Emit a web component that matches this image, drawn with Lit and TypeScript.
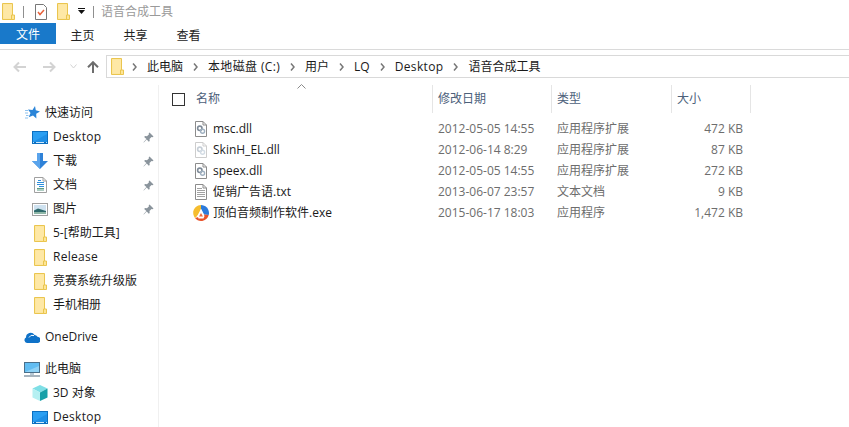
import { LitElement, html, css } from "lit";
import { customElement } from "lit/decorators.js";

const folder = (w = 13, h = 17) => html`<svg class="ic" width=${w} height=${h} viewBox="0 0 13 17"><path d="M.5.5h10v16H.5z" fill="#fde596" stroke="#eac54f"/><path d="M1.500 1.500h8.500v10.500l-1 1v2.500H1.500z" fill="#fee8a6"/><path d="M9.500 16.500v-4.500h3v4.500z" fill="#fde596" stroke="#eac54f"/></svg>`;
const desktop = html`<svg class="ic" width="16" height="13" viewBox="0 0 16 13"><rect width="16" height="13" fill="#0c6fc0"/><rect x="1" y="1" width="14" height="10" fill="#2b9ff2"/><path d="M1 11L15 3v8z" fill="#1f8fe6"/><rect x="1" y="11" width="1" height="1" fill="#bfe0f8"/><rect x="14" y="11" width="1" height="1" fill="#bfe0f8"/><rect x="4" y="11" width="8" height="1" fill="#cfe8fb"/></svg>`;
const pin = html`<svg class="pin" width="11" height="11" viewBox="0 0 11 11"><path d="M6.500.5l4 4-1 .8-1-.3-2 2 .2 2-.9.8-2.100-2.200L.8 10.500.5 10.200 3.400 7 1.200 5l.8-.9 2 .2 2-2-.3-1z" fill="#8a949c"/></svg>`;
const dll = (light = false) => {
  const page = light ? "#cdcdcd" : "#8c8c8c";
  const a = light ? "#c6ced6" : "#7f8b98";
  const b = light ? "#d3dce4" : "#9fb0c0";
  return html`<svg class="ic" width="12" height="16" viewBox="0 0 12 16"><path d="M.5.5h7.500l3.500 3.500v11.500H.5z" fill="#fff" stroke=${page}/><path d="M8 .5V4h3.500" fill="none" stroke=${page}/><circle cx="4.800" cy="7.300" r="2.200" fill="none" stroke=${a} stroke-width="1.600"/><circle cx="7.600" cy="10.300" r="2" fill="none" stroke=${b} stroke-width="1.400"/></svg>`;
};
const txt = html`<svg class="ic" width="12" height="16" viewBox="0 0 12 16"><path d="M.5.5h7.500l3.500 3.500v11.500H.5z" fill="#fff" stroke="#8c8c8c"/><path d="M8 .5V4h3.500" fill="none" stroke="#8c8c8c"/><path d="M2 4.500h5M2 6.500h8M2 8.500h8M2 10.500h8M2 12.500h8" stroke="#a2a2a2"/></svg>`;
const exe = html`<svg class="ic" width="16" height="16" viewBox="0 0 16 16"><path d="M8 0C4 0 .8 3 .2 6.800.1 9 .6 11.200 2 13l3.200-3L8 3.500z" fill="#f6bd2e"/><path d="M8 0c4.400 0 8 3.600 8 8 0 .7-.1 1.400-.3 2L11 9.500 8 3.500z" fill="#2c7bdc"/><path d="M2 13c1.500 1.900 3.700 3 6 3 3.700 0 6.800-2.500 7.700-6L11 9.500l-1 2.500H5.500z" fill="#e9542c"/><path d="M8 4.500l3.500 6.500-1 2.500h-5l-1-3z" fill="#fff"/><path d="M8 8l2 3.500H6z" fill="#ef6a3c"/></svg>`;

const cols = [
  { cls: "date", label: "修改日期" },
  { cls: "type", label: "类型" },
  { cls: "size", label: "大小" },
];
const files: [any, string, string, string, string][] = [
  [dll(), "msc.dll", "2012-05-05 14:55", "应用程序扩展", "472 KB"],
  [dll(true), "SkinH_EL.dll", "2012-06-14 8:29", "应用程序扩展", "87 KB"],
  [dll(), "speex.dll", "2012-05-05 14:55", "应用程序扩展", "272 KB"],
  [txt, "促销广告语.txt", "2013-06-07 23:57", "文本文档", "9 KB"],
  [exe, "顶伯音频制作软件.exe", "2015-06-17 18:03", "应用程序", "1,472 KB"],
];
const crumbs = [
  { t: "此电脑", c: "" },
  { t: "本地磁盘 (C:)", c: "wide" },
  { t: "用户", c: "" },
  { t: "LQ", c: "" },
  { t: "Desktop", c: "wide" },
  { t: "语音合成工具", c: "" },
];

const chev = html`<svg class="crumb-sep" width="5" height="8" viewBox="0 0 5 8"><path d="M1 .5L4 4 1 7.500" fill="none" stroke="#777" stroke-width="1.500"/></svg>`;

@customElement("app-root")
export class AppRoot extends LitElement {
  static styles = css`
    :host { display: block; width: 849px; height: 427px; overflow: hidden; background: #fff; color: #1a1a1a;
      font: 12px/16px "Open Sans", "Noto Sans CJK SC", sans-serif; }
    .ic { flex: none; display: block; }
    .title { height: 23px; display: flex; align-items: center; padding-left: 2px; }
    .title .sep { width: 1px; height: 12px; background: #8f8f8f; }
    .title .sep.first { margin-left: 8px; }
    .title .t { color: #9a9a9a; margin-left: 7px; }
    .check { margin: 0 10px 0 11px; }
    .drop { margin: 0 8px; display: block; }
    .tabs { height: 23px; display: flex; color: #222; }
    .tab { display: flex; align-items: center; justify-content: center; width: 53px; padding-top: 2px; box-sizing: border-box; }
    .tab.file { width: 56px; background: #1979ca; color: #fff; }
    .rule { height: 3px; border-bottom: 1px solid #dadada; }
    .addr-row { height: 29px; display: flex; align-items: flex-start; padding-top: 5px; box-sizing: border-box; }
    .nav { width: 106px; flex: none; display: flex; align-items: center; height: 23px; padding-left: 13px; box-sizing: border-box; }
    .nav svg { display: block; flex: none; }
    .nav .next { margin-left: 15px; }
    .nav .down { margin-left: 14px; }
    .nav .up { margin-left: 10px; }
    .addr { flex: 1; height: 23px; box-sizing: border-box; border: 1px solid #d9d9d9; border-right: 0; display: flex; align-items: center; padding-left: 4px; color: #1a1a1a; }
    .addr .ic { margin-right: -2px; }
    .crumb-sep { margin: 0 10px; }
    .c.wide { letter-spacing: .35px; }
    .main { display: flex; }
    .side { width: 158px; height: 342px; flex: none; margin-top: 6px; padding-top: 16px; box-sizing: content-box; border-right: 1px solid #f0f0f0; }
    .row { height: 24px; display: flex; align-items: center; position: relative; padding-left: 32px; box-sizing: border-box; white-space: nowrap; }
    .row .ic { margin-right: 5px; }
    .row .lat { letter-spacing: .3px; }
    .row.folder .ic { margin-left: 2px; margin-right: 6px; }
    .row.doc .ic { margin-left: 2px; margin-right: 6px; }
    .row.top { padding-left: 25px; }
    .row.root { padding-left: 24px; }
    .gap { height: 8px; }
    .pin { position: absolute; left: 143px; top: 7px; }
    .list { flex: 1; position: relative; }
    .head { display: flex; height: 28px; align-items: center; margin-top: 6px; color: #4c607a; position: relative; }
    .head .name { width: 273px; flex: none; box-sizing: border-box; padding-left: 13px; display: flex; align-items: center; }
    .box { width: 11px; height: 11px; border: 1px solid #333; margin-right: 11px; flex: none; }
    .head .col { height: 28px; display: flex; align-items: center; flex: none; box-sizing: border-box; border-left: 1px solid #e5e5e5; padding-left: 5px; }
    .col.date { width: 119px; }
    .col.type { width: 120px; }
    .col.size { width: 80px; border-right: 1px solid #e5e5e5; }
    .sort { position: absolute; left: 138px; top: -1px; display: block; }
    .files { padding-top: 5px; }
    .file { height: 21px; display: flex; align-items: center; color: #6d6d6d; white-space: nowrap; }
    .file .n { width: 272px; flex: none; box-sizing: border-box; display: flex; align-items: center; padding-left: 36px; color: #1a1a1a; }
    .file .n .ic { margin-right: 6px; }
    .file .n .wide { margin-left: -2px; margin-right: 4px; }
    .file .n .wide .ic { margin-right: 0; }
    .file .d { width: 119px; flex: none; padding-left: 7px; box-sizing: border-box; }
    .file .y { width: 120px; flex: none; padding-left: 7px; box-sizing: border-box; }
    .file .s { width: 73px; flex: none; text-align: right; }
  `;

  render() {
    const arrow = (cls: string, d: string, c: string) => html`<svg class=${cls} width="14" height="12" viewBox="0 0 14 12"><path d=${d} fill="none" stroke=${c} stroke-width="2"/></svg>`;
    return html`
      <div class="title">
        ${folder()}
        <div class="sep first"></div>
        <svg class="ic check" width="12" height="16" viewBox="0 0 12 16"><path d="M.5.5h8l3 3v12H.5z" fill="#fff" stroke="#777"/><path d="M3 8l2 2.500L9 6" fill="none" stroke="#e8613a" stroke-width="1.500"/></svg>
        ${folder()}
        <svg class="drop" width="7" height="7" viewBox="0 0 7 7"><path d="M0 0h7v1H0zM0 2h7L3.500 6z" fill="#111"/></svg>
        <div class="sep"></div>
        <span class="t">语音合成工具</span>
      </div>
      <div class="tabs">
        <div class="tab file">文件</div>
        <div class="tab">主页</div>
        <div class="tab">共享</div>
        <div class="tab">查看</div>
      </div>
      <div class="rule"></div>
      <div class="addr-row">
        <div class="nav">
          ${arrow("", "M13 6H2M6 1.500L1.500 6 6 10.500", "#d3d3d3")}
          ${arrow("next", "M1 6h11M8 1.500L12.500 6 8 10.500", "#d3d3d3")}
          <svg class="down" width="7" height="5" viewBox="0 0 7 5"><path d="M.5.5L3.500 4 6.500.5" fill="none" stroke="#d3d3d3"/></svg>
          <svg class="up" width="12" height="12" viewBox="0 0 12 12"><path d="M6 12V1.500M1 6.200L6 1.200l5 5" fill="none" stroke="#6d6d6d" stroke-width="2"/></svg>
        </div>
        <div class="addr">
          ${folder()}
          ${crumbs.map((c) => html`${chev}<span class="c ${c.c}">${c.t}</span>`)}
        </div>
      </div>
      <div class="main">
        <div class="side">
          <div class="row top"><svg class="ic" width="15" height="14" viewBox="0 0 15 14"><path d="M10 0l.8 4.300 4.200 1.200-3.800 2.200.2 4.800-3.400-3-4.300 1.700 1.800-4.300L3 3.500l4.500.4z" fill="#2b85d8"/><path d="M0 4.500h3M0 7h3M1 9.500h2.500M0 12h3" stroke="#8ec2ee"/></svg>快速访问</div>
          <div class="row">${desktop}<span class="lat">Desktop</span>${pin}</div>
          <div class="row"><svg class="ic" width="16" height="16" viewBox="0 0 16 16"><path d="M5 0h6v8h5l-8 8-8-8h5z" fill="#2f82d8"/><path d="M8 16L0 8h5V0h3z" fill="#5aa4ec"/></svg><span>下载</span>${pin}</div>
          <div class="row doc"><svg class="ic" width="13" height="16" viewBox="0 0 13 16"><path d="M.5.5h8.500l3.500 3.500v11.500H.5z" fill="#fff" stroke="#a0a0a0"/><path d="M9 .5V4h3.500" fill="none" stroke="#a0a0a0"/><path d="M4 3.500h3M3 5.500h7M3 7.500h7M5 9.500h5" stroke="#2e8fdc"/><path d="M3 11.500h7M3 13h7" stroke="#5f9c86"/></svg><span>文档</span>${pin}</div>
          <div class="row"><svg class="ic" width="16" height="13" viewBox="0 0 16 13"><rect x=".5" y=".5" width="15" height="12" fill="#fff" stroke="#a0a0a0"/><rect x="2" y="2" width="12" height="9" fill="#cfe2f0"/><path d="M2 7.500l4-2 8 2.500v3H2z" fill="#2f6a6c"/><path d="M2 9h12v2H2z" fill="#8fb7a8"/></svg><span>图片</span>${pin}</div>
          <div class="row folder">${folder()}<span>5-[帮助工具]</span></div>
          <div class="row folder">${folder()}<span class="lat">Release</span></div>
          <div class="row folder">${folder()}<span>竞赛系统升级版</span></div>
          <div class="row folder">${folder()}<span>手机相册</span></div>
          <div class="gap"></div>
          <div class="row root"><svg class="ic" width="16" height="11" viewBox="0 0 16 11"><path d="M3 11a3 3 0 0 1-1-5.600A4.600 4.600 0 0 1 10.500 3a3.800 3.800 0 0 1 3 1.700A3.200 3.200 0 0 1 14 11z" fill="#0f72c8"/><path d="M5 5.500a4 4 0 0 1 5-2" fill="none" stroke="#fff"/></svg>OneDrive</div>
          <div class="gap"></div>
          <div class="row root"><svg class="ic" width="16" height="15" viewBox="0 0 16 15"><rect x=".5" y=".5" width="15" height="10" fill="#62bdf2" stroke="#4a6f8a"/><path d="M1 10L15 4v6z" fill="#8fd2f6"/><rect x="6" y="11" width="4" height="2" fill="#b8c8d4"/><rect y="13" width="16" height="2" fill="#a8b4be"/></svg>此电脑</div>
          <div class="row"><svg class="ic" width="16" height="16" viewBox="0 0 16 16"><path d="M8 0l7.500 3.500L8 7.500.5 3.500z" fill="#7fdfe6"/><path d="M.5 3.500l7.500 4V16L.5 12.500z" fill="#b5f0f2"/><path d="M15.500 3.500L8 7.500V16l7.500-3.500z" fill="#17a0a8"/></svg><span>3D 对象</span></div>
          <div class="row">${desktop}<span class="lat">Desktop</span></div>
        </div>
        <div class="list">
          <div class="head">
            <svg class="sort" width="9" height="5" viewBox="0 0 9 5"><path d="M.5 4.500L4.500.5l4 4" fill="none" stroke="#8a8a8a"/></svg>
            <div class="name"><div class="box"></div>名称</div>
            ${cols.map((c) => html`<div class="col ${c.cls}">${c.label}</div>`)}
          </div>
          <div class="files">
            ${files.map((f, i) => html`<div class="file">
              <div class="n"><span class=${i === 4 ? "wide" : ""}>${f[0]}</span><span>${f[1]}</span></div>
              <div class="d">${f[2]}</div><div class="y">${f[3]}</div><div class="s">${f[4]}</div>
            </div>`)}
          </div>
        </div>
      </div>
    `;
  }
}
